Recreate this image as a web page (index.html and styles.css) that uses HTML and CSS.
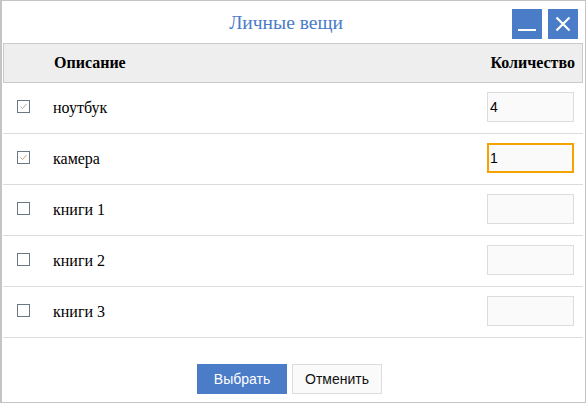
FILE: index.html
```html
<!DOCTYPE html>
<html lang="ru">
<head>
<meta charset="utf-8">
<link rel="stylesheet" href="styles.css">
</head>
<body>
<div class="window">
  <div class="titlebar">
    <div class="title">Личные вещи</div>
    <div class="tools">
      <button class="tool" aria-label="minimize">
        <svg width="30" height="30" viewBox="0 0 30 30"><rect x="6" y="20" width="18" height="2" fill="#fff"/></svg>
      </button>
      <button class="tool" aria-label="close">
        <svg width="30" height="30" viewBox="0 0 30 30"><path d="M8.5 8.5 L21.5 21.5 M21.5 8.5 L8.5 21.5" stroke="#fff" stroke-width="2.2" fill="none"/></svg>
      </button>
    </div>
  </div>
  <div class="grid">
    <div class="row head">
      <div class="c-check"></div>
      <div class="c-desc">Описание</div>
      <div class="c-qty">Количество</div>
    </div>
    <div class="row">
      <div class="c-check"><span class="box checked"><svg width="11" height="11" viewBox="0 0 11 11"><path d="M2.5 5.5 L4.5 7.5 L8.5 3" stroke="#b8ab98" stroke-width="1" fill="none"/></svg></span></div>
      <div class="c-desc">ноутбук</div>
      <div class="c-qty"><input class="qty" value="4"></div>
    </div>
    <div class="row">
      <div class="c-check"><span class="box checked"><svg width="11" height="11" viewBox="0 0 11 11"><path d="M2.5 5.5 L4.5 7.5 L8.5 3" stroke="#c4a57a" stroke-width="1" fill="none"/></svg></span></div>
      <div class="c-desc">камера</div>
      <div class="c-qty"><input class="qty focus" value="1"></div>
    </div>
    <div class="row">
      <div class="c-check"><span class="box"></span></div>
      <div class="c-desc">книги 1</div>
      <div class="c-qty"><input class="qty" value=""></div>
    </div>
    <div class="row">
      <div class="c-check"><span class="box"></span></div>
      <div class="c-desc">книги 2</div>
      <div class="c-qty"><input class="qty" value=""></div>
    </div>
    <div class="row">
      <div class="c-check"><span class="box"></span></div>
      <div class="c-desc">книги 3</div>
      <div class="c-qty"><input class="qty" value=""></div>
    </div>
  </div>
  <div class="footer">
    <button class="btn primary">Выбрать</button>
    <button class="btn">Отменить</button>
  </div>
</div>
</body>
</html>
```
FILE: styles.css
```css
html, body {
  margin: 0;
  padding: 0;
  background: #fff;
}
.window {
  box-sizing: border-box;
  width: 586px;
  height: 403px;
  border: 1px solid #c4c4c4;
  border-left-width: 2px;
  display: flex;
  flex-direction: column;
  font-family: "Liberation Serif", "Times New Roman", serif;
  color: #000;
}
.titlebar {
  height: 42px;
  box-sizing: border-box;
  display: flex;
  align-items: flex-start;
  padding: 8px 7px 0 0;
}
.title {
  flex: 1;
  text-align: center;
  color: #4a7cc7;
  font-size: 19.5px;
  line-height: 28px;
  padding-left: 64px;
  padding-right: 6px;
}
.tools {
  display: flex;
  gap: 6px;
}
.tool {
  width: 30px;
  height: 30px;
  padding: 0;
  border: 0;
  background: #4a7cc7;
  display: block;
}
.tool svg { display: block; }
.grid {
  margin: 0 2px 0 1px;
}
.row {
  display: grid;
  grid-template-columns: 50px 1fr 120px;
  height: 51px;
  box-sizing: border-box;
  border-bottom: 1px solid #dcdcdc;
  align-items: center;
  font-size: 16px;
}
.row.head {
  height: 40px;
  background: #eee;
  border: 1px solid #cacaca;
  font-weight: bold;
}
.c-check {
  padding-left: 14px;
  display: flex;
  align-items: center;
}
.c-qty {
  text-align: right;
  padding-right: 9px;
}
.head .c-qty { padding-right: 7px; }
.box {
  box-sizing: border-box;
  width: 13px;
  height: 13px;
  border: 1px solid #6a7886;
  background: #fff;
  display: block;
  margin-top: -4px;
}
.box svg { display: block; margin: 0; }
.qty {
  box-sizing: border-box;
  width: 87px;
  height: 30px;
  border: 1px solid #dcdcdc;
  background: #fafafa;
  font-family: "Liberation Sans", Arial, sans-serif;
  font-size: 14px;
  padding: 0 2px;
  margin: 0 0 2px 0;
  outline: none;
  vertical-align: middle;
  display: inline-block;
}
.qty.focus {
  border: 2px solid #f5a300;
  padding: 0 1px;
}
.footer {
  flex: 1;
  display: flex;
  justify-content: center;
  align-items: flex-start;
  gap: 5px;
  padding-top: 26px;
  padding-right: 8px;
}
.btn {
  box-sizing: border-box;
  width: 90px;
  height: 30px;
  border: 1px solid #dcdcdc;
  background: #fafafa;
  font-family: "Liberation Sans", Arial, sans-serif;
  font-size: 14px;
  color: #111;
  padding: 0;
}
.btn.primary {
  background: #4a7cc7;
  border-color: #4a7cc7;
  color: #fff;
}
```
